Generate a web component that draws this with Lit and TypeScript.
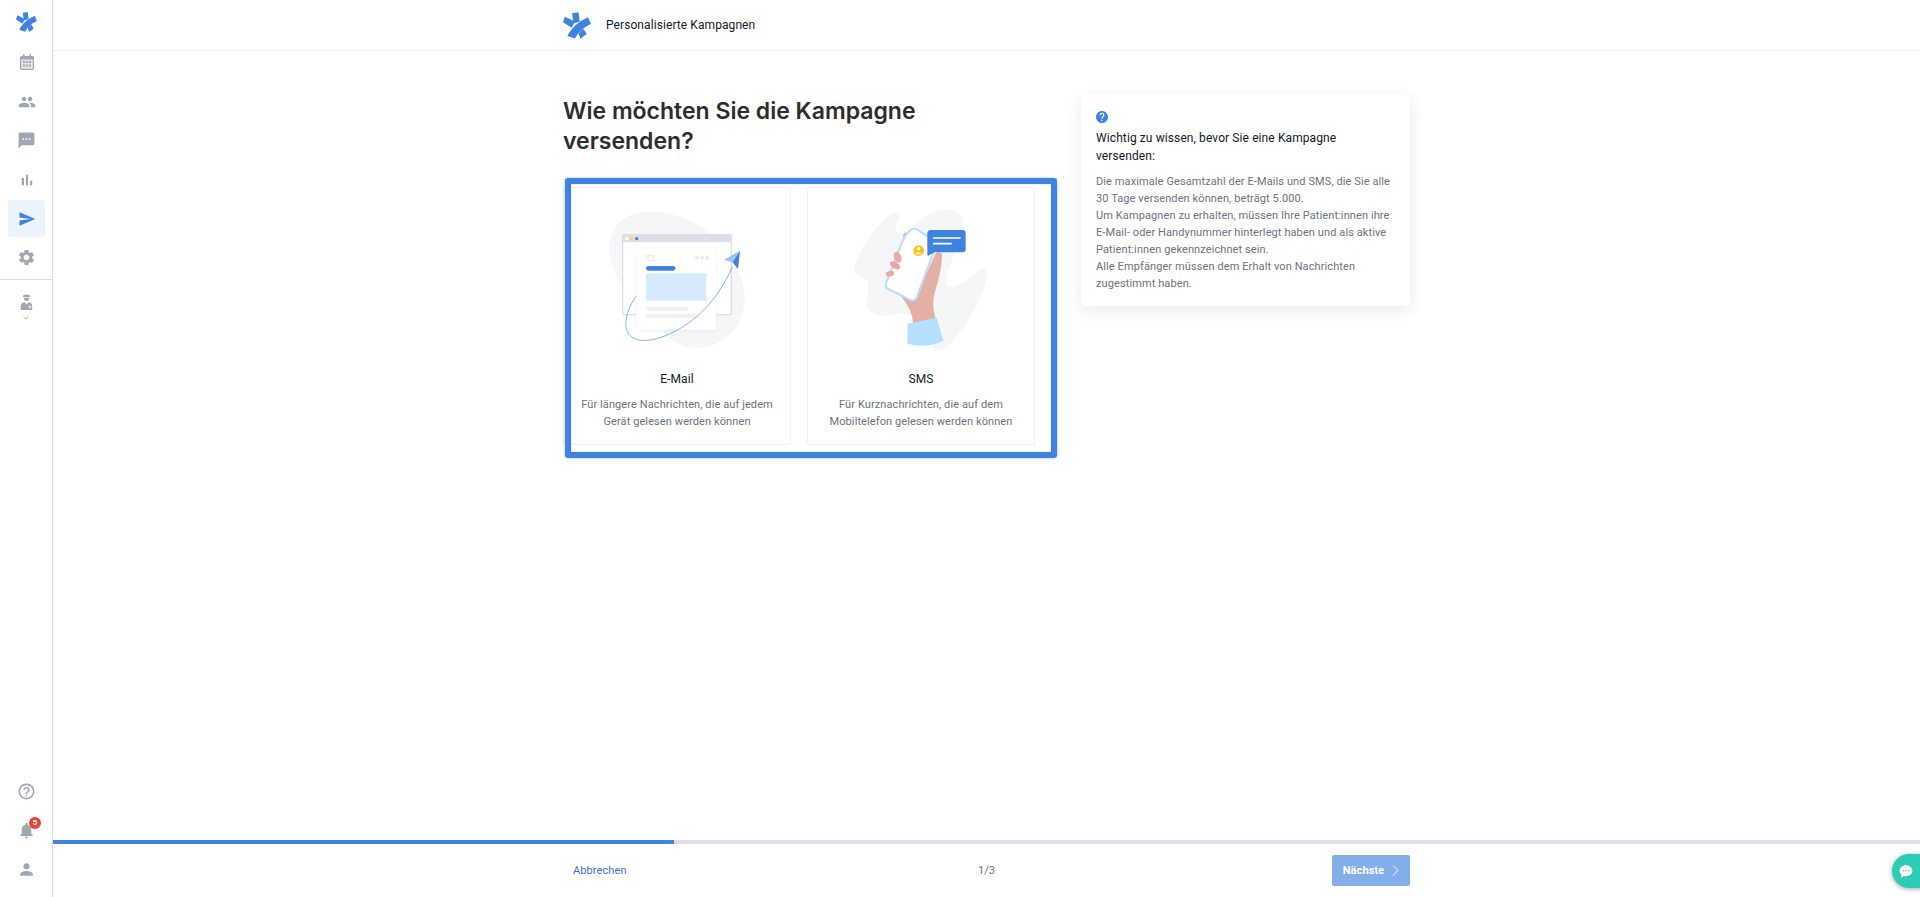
import { LitElement, html, css, svg } from "lit";
import { customElement } from "lit/decorators.js";

const LOGO = svg`<path d="M29 3 50 0 54 30 34 36z"/><path d="M0 32 6 14 38 30 28 50z"/><path d="M46 58 60 44 76 70 56 85z"/><path d="M80 16 90 38Q58 50 38 84L14 76Q32 38 80 16z" stroke="#fff" stroke-width="2" paint-order="stroke"/>`;

const icon = (d: string, size: number) => html`<svg class="mi" width=${size} height=${size} viewBox="0 0 24 24"><path d=${d}/></svg>`;

const P = {
  people: "M16 11c1.66 0 2.99-1.34 2.99-3S17.66 5 16 5c-1.66 0-3 1.34-3 3s1.34 3 3 3zm-8 0c1.66 0 2.99-1.34 2.99-3S9.66 5 8 5C6.34 5 5 6.34 5 8s1.34 3 3 3zm0 2c-2.33 0-7 1.17-7 3.5V19h14v-2.5c0-2.33-4.67-3.5-7-3.5zm8 0c-.29 0-.62.02-.97.05 1.16.84 1.97 1.97 1.97 3.45V19h6v-2.5c0-2.33-4.67-3.5-7-3.5z",
  sms: "M20 2H4c-1.1 0-1.99.9-1.99 2L2 22l4-4h14c1.1 0 2-.9 2-2V4c0-1.1-.9-2-2-2zM9 11H7V9h2v2zm4 0h-2V9h2v2zm4 0h-2V9h2v2z",
  bar: "M5 9.2h3V19H5zM10.6 5h2.8v14h-2.8zm5.6 8H19v6h-2.8z",
  send: "M2.01 21 23 12 2.01 3 2 10l15 2-15 2z",
  gear: "M19.14 12.94c.04-.3.06-.61.06-.94 0-.32-.02-.64-.07-.94l2.03-1.58c.18-.14.23-.41.12-.61l-1.92-3.32c-.12-.22-.37-.29-.59-.22l-2.39.96c-.5-.38-1.03-.7-1.62-.94l-.36-2.54c-.04-.24-.24-.41-.48-.41h-3.84c-.24 0-.43.17-.47.41l-.36 2.54c-.59.24-1.13.57-1.62.94l-2.39-.96c-.22-.08-.47 0-.59.22L2.74 8.87c-.12.21-.08.47.12.61l2.03 1.58c-.05.3-.09.63-.09.94s.02.64.07.94l-2.03 1.58c-.18.14-.23.41-.12.61l1.92 3.32c.12.22.37.29.59.22l2.39-.96c.5.38 1.03.7 1.62.94l.36 2.54c.05.24.24.41.48.41h3.84c.24 0 .44-.17.47-.41l.36-2.54c.59-.24 1.13-.56 1.62-.94l2.39.96c.22.08.47 0 .59-.22l1.92-3.32c.12-.22.07-.47-.12-.61l-2.01-1.58zM12 15.6c-1.98 0-3.6-1.62-3.6-3.6s1.62-3.6 3.6-3.6 3.6 1.62 3.6 3.6-1.62 3.6-3.6 3.6z",
  help: "M11 18h2v-2h-2v2zm1-16C6.48 2 2 6.48 2 12s4.48 10 10 10 10-4.48 10-10S17.52 2 12 2zm0 18c-4.41 0-8-3.59-8-8s3.59-8 8-8 8 3.59 8 8-3.59 8-8 8zm0-14c-2.21 0-4 1.79-4 4h2c0-1.1.9-2 2-2s2 .9 2 2c0 2-3 1.75-3 5h2c0-2.25 3-2.5 3-5 0-2.21-1.79-4-4-4z",
  bell: "M12 22c1.1 0 2-.9 2-2h-4c0 1.1.9 2 2 2zm6-6v-5c0-3.07-1.63-5.64-4.5-6.32V4c0-.83-.67-1.5-1.5-1.5s-1.5.67-1.5 1.5v.68C7.64 5.36 6 7.92 6 11v5l-2 2v1h16v-1l-2-2z",
  person: "M12 12c2.21 0 4-1.79 4-4s-1.79-4-4-4-4 1.79-4 4 1.79 4 4 4zm0 2c-2.67 0-8 1.34-8 4v2h16v-2c0-2.66-5.33-4-8-4z",
};

const emailArt = html`<svg class="art" width="160" height="160" viewBox="-9 0 480 480">
  <defs><filter id="ps" x="-20%" y="-20%" width="140%" height="140%"><feDropShadow dx="0" dy="3" stdDeviation="6" flood-color="#9aa3b2" flood-opacity=".16"/></filter></defs>
  <path d="M28 130C28 60 80 20 140 20c90 0 170 30 230 105 40 50 62 100 64 150 2 80-60 150-135 153-50 2-85-15-118-60-40-50-100-90-130-150-13-28-23-55-23-88z" fill="#f5f6f8"/>
  <rect x="68" y="89" width="326" height="240" rx="6" fill="#fff" stroke="#dcdfe5" stroke-width="4"/>
  <path d="M66 112V97q0-10 10-10h310q10 0 10 10v15z" fill="#dcdfe5"/>
  <circle cx="80" cy="101" r="5" fill="#fff"/><circle cx="95" cy="101" r="5" fill="#f8d25e"/><circle cx="110" cy="101" r="5" fill="#3f83e0"/>
  <rect x="110" y="132" width="238" height="242" fill="#fff" filter="url(#ps)"/>
  <rect x="141" y="151" width="21" height="15" fill="none" stroke="#e6e8ec" stroke-width="3"/><path d="M141 153l10 6 11-6" fill="none" stroke="#e6e8ec" stroke-width="2"/>
  <circle cx="291" cy="158" r="6" fill="#e9ebef"/><circle cx="307" cy="158" r="6" fill="#e9ebef"/><circle cx="322" cy="158" r="6" fill="#e9ebef"/>
  <rect x="138" y="183" width="88" height="14" rx="7" fill="#3f83e0"/>
  <rect x="138" y="205" width="181" height="82" fill="#d6ebff"/>
  <rect x="138" y="306" width="127" height="12" rx="6" fill="#eff0f3"/><rect x="138" y="327" width="155" height="12" rx="6" fill="#eff0f3"/>
  <path d="M110 272C80 310 62 372 95 396c45 32 150-15 210-75 40-38 70-85 92-135" fill="none" stroke="#6fa3e8" stroke-width="2.5"/>
  <path d="M372 165 420 137 398 172z" fill="#93c5fd"/><path d="M398 172 420 137 414 192z" fill="#3f7fdc"/>
</svg>`;

const smsArt = html`<svg class="art" width="160" height="160" viewBox="-12 0 480 480">
  <path d="M27 190C35 150 90 65 135 28 155 14 168 28 158 48 150 62 145 75 165 85 185 92 205 60 245 32 280 10 335 5 350 40 362 75 330 140 305 205 295 235 305 250 330 245 365 235 395 190 418 192 432 198 425 240 400 290 375 345 320 425 285 437 262 442 258 415 250 385 240 345 215 330 170 325 130 335 75 340 66 300 62 270 78 250 65 225 50 210 22 215 27 190z" fill="#f5f6f8"/>
  <path d="M176 110Q172 90 178 84q8-4 12 6l6 25z" fill="#e3afa7"/>
  <path d="M165 270 205 288 252 190 272 145Q285 138 291 148 292 190 270 260 258 300 272 340L203 356Q207 320 165 270z" fill="#e3afa7"/>
  <path d="M196 76Q208 66 220 76L268 108Q276 114 272 124L216 276Q208 292 194 284L130 252Q118 246 124 232L172 110Q180 90 196 76z" fill="#fff" stroke="#b9dcff" stroke-width="6"/>
  <ellipse cx="158" cy="157" rx="17" ry="11" transform="rotate(70 158 157)" fill="#eba9a3"/>
  <ellipse cx="150" cy="181" rx="17" ry="10" transform="rotate(30 150 181)" fill="#eba9a3"/>
  <ellipse cx="135" cy="206" rx="13" ry="8" transform="rotate(-10 135 206)" fill="#eba9a3"/>
  <circle cx="221" cy="137" r="16" fill="#fcc419"/><circle cx="221" cy="131" r="5" fill="#fff"/><path d="M212 145q9-8 18 0l-3 4h-12z" fill="#ffe9a8"/>
  <path d="M188 356 275 338 295 408Q240 432 187 416z" fill="#b6e0ff"/>
  <path d="M258 75H352Q362 75 362 85V132Q362 142 352 142H268L250 152Q247 153 247 149V86Q247 75 258 75z" fill="#3f83e0"/>
  <path d="M266 99H345M266 116H318" stroke="#fff" stroke-width="5" stroke-linecap="round"/>
</svg>`;

@customElement("app-root")
export class AppRoot extends LitElement {
  static styles = css`
    :host { display: block; height: 897px; font-family: Roboto, "Liberation Sans", sans-serif; background: #fff; overflow: hidden; position: relative; }
    * { box-sizing: border-box; }
    .shell { display: flex; height: 897px; }
    .side { width: 53px; flex: none; border-right: 1px solid #dcdfe5; display: flex; flex-direction: column; }
    .side-logo { height: 44px; display: flex; align-items: center; justify-content: center; }
    .side-logo svg, .head-logo { fill: #3f83e0; display: block; }
    .nav { display: flex; flex-direction: column; gap: 2px; }
    .nav.main { padding: 0 7px 0 8px; }
    .item { height: 37px; display: flex; align-items: center; justify-content: center; border-radius: 3px; position: relative; }
    .item .mi { fill: #a0a7b3; display: block; }
    .cal { display: block; margin-top: -1px; }
    .item.on { background: #ebf3fd; }
    .item.on .mi { fill: #3f83e0; }
    .rule { height: 1px; background: #dcdfe5; margin-top: 3px; }
    .doc { display: flex; flex-direction: column; align-items: center; padding-top: 14px; gap: 6px; }
    .spacer { flex: 1; }
    .nav.bottom { padding: 0 7px 9px 8px; }
    .badge { position: absolute; left: 21px; top: 5px; width: 12px; height: 12px; border-radius: 50%; background: #ea4335; color: #fff; font-size: 8px; font-weight: 700; line-height: 12px; text-align: center; }
    .main-col { flex: 1; min-width: 0; display: flex; flex-direction: column; }
    .wrap { width: 847px; margin: 0 auto; }
    header { height: 51px; border-bottom: 1px solid #eeeff1; flex: none; }
    header .wrap { height: 50px; display: flex; align-items: center; gap: 15px; }
    header .t { font-size: 12px; letter-spacing: .08px; color: #111827; }
    .content { flex: 1; padding-top: 46px; }
    .cols { display: flex; }
    .left { width: 518px; position: relative; }
    h1 { margin: 0; font-family: Inter, sans-serif; font-weight: 600; font-size: 23px; line-height: 29.500px; color: #2d2d2d; width: 400px; }
    .cards { display: flex; gap: 16px; margin-top: 31px; }
    .card { width: 228px; height: 258px; border: 1px solid #eef0f2; border-radius: 2px; display: flex; flex-direction: column; align-items: center; padding-top: 17px; text-align: center; }
    .art { display: block; flex: none; }
    .name { font-size: 12px; color: #111827; margin-top: 6px; line-height: 17px; letter-spacing: .1px; }
    .desc { font-size: 11px; letter-spacing: .1px; color: #6b7280; line-height: 17px; margin-top: 8px; }
    .focus { position: absolute; left: 2px; top: 81px; width: 492px; height: 280px; border: 6px solid #3f83e0; border-radius: 3px; box-shadow: 0 0 3px rgba(0,0,0,.3), inset 0 0 2px rgba(0,0,0,.2); pointer-events: none; }
    .info { width: 329px; height: 211px; margin-top: -2px; border-radius: 4px; background: #fff; box-shadow: 0 4px 16px rgba(40,50,70,.1); padding: 16px 15px 0; }
    .info .q { display: block; width: 12px; height: 12px; fill: #3f83e0; }
    .info h2 { margin: 6px 0 0; font-size: 12px; font-weight: 400; letter-spacing: .1px; color: #111827; line-height: 18px; }
    .info p { margin: 8px 0 0; font-size: 11px; letter-spacing: .1px; color: #6b7280; line-height: 17px; }
    .bar { height: 4px; background: #dcdfe5; flex: none; }
    .bar div { width: 621px; height: 4px; background: #3f83e0; }
    footer { height: 53px; flex: none; }
    footer .wrap { height: 53px; display: grid; grid-template-columns: 1fr auto 1fr; align-items: center; }
    .cancel { font-size: 11px; letter-spacing: .1px; color: #3f6fd6; padding-left: 10px; }
    .step { font-size: 11px; letter-spacing: .1px; color: #6b7280; }
    .next { justify-self: end; width: 78px; height: 31px; border-radius: 2px; background: #82aeea; color: #fff; font-size: 11px; letter-spacing: .1px; font-weight: 700; display: flex; align-items: center; justify-content: center; gap: 8px; }
    .chat { position: absolute; right: -6px; top: 854px; width: 34px; height: 34px; border-radius: 17px 0 0 17px; background: #2dccb5; box-shadow: 0 1px 5px rgba(0,0,0,.35); display: flex; align-items: center; padding-left: 7px; }
  `;

  render() {
    return html`<div class="shell">
      <aside class="side">
        <div class="side-logo"><svg width="21" height="20" viewBox="0 0 90 85">${LOGO}</svg></div>
        <div class="nav main">
          <div class="item"><svg class="cal" width="14" height="16" viewBox="0 0 14 16"><path fill="#a0a7b3" d="M3 0h1.500v2h5V0H11v2h1.500Q14 2 14 3.500V14.500Q14 16 12.500 16H1.500Q0 16 0 14.500V3.500Q0 2 1.500 2H3z"/><rect x="1.200" y="5.500" width="11.600" height="9.300" fill="#e4e6ea"/><path fill="#a0a7b3" d="M3 7h2v2H3zM6 7h2v2H6zM9 7h2v2H9zM3 10.500h2v2H3zM6 10.500h2v2H6zM9 10.500h2v2H9z"/></svg></div>
          <div class="item">${icon(P.people, 18)}</div>
          <div class="item">${icon(P.sms, 19)}</div>
          <div class="item">${icon(P.bar, 18)}</div>
          <div class="item on">${icon(P.send, 18)}</div>
          <div class="item">${icon(P.gear, 19)}</div>
        </div>
        <div class="rule"></div>
        <div class="doc">
          <svg width="13" height="16" viewBox="0 0 13 16" fill="#a0a7b3"><path d="M3.200 1.200Q6.500-.4 9.800 1.200V3.200H3.200z"/><path d="M3.900 4H9.100Q9.100 7 6.500 7 3.900 7 3.900 4z"/><path fill-rule="evenodd" d="M.8 16V11.500Q.8 9 4.500 8.200L6.500 10.500 8.500 8.200Q12.200 9 12.200 11.500V16zM8.500 12.500h1v-1h.8v1h1v.9h-1v1h-.8v-1h-1z"/></svg>
          <svg width="6" height="4" viewBox="0 0 6 4"><path d="M.5.5 3 3 5.500.5" fill="none" stroke="#a0a7b3" stroke-width=".8"/></svg>
        </div>
        <div class="spacer"></div>
        <div class="nav bottom">
          <div class="item">${icon(P.help, 19)}</div>
          <div class="item">${icon(P.bell, 19)}<span class="badge">5</span></div>
          <div class="item">${icon(P.person, 19)}</div>
        </div>
      </aside>
      <div class="main-col">
        <header><div class="wrap">
          <svg class="head-logo" width="28" height="27" viewBox="0 0 90 85">${LOGO}</svg>
          <span class="t">Personalisierte Kampagnen</span>
        </div></header>
        <div class="content"><div class="wrap cols">
          <div class="left">
            <h1>Wie möchten Sie die Kampagne versenden?</h1>
            <div class="cards">
              <div class="card">${emailArt}<div class="name">E-Mail</div><div class="desc">Für längere Nachrichten, die auf jedem<br>Gerät gelesen werden können</div></div>
              <div class="card">${smsArt}<div class="name">SMS</div><div class="desc">Für Kurznachrichten, die auf dem<br>Mobiltelefon gelesen werden können</div></div>
            </div>
            <div class="focus"></div>
          </div>
          <section class="info">
            <svg class="q" viewBox="2 2 20 20"><path d="M12 2C6.480 2 2 6.480 2 12s4.480 10 10 10 10-4.480 10-10S17.520 2 12 2zm1 17h-2v-2h2v2zm2.070-7.750-.9.920C13.450 12.900 13 13.500 13 15h-2v-.5c0-1.100.45-2.100 1.170-2.830l1.240-1.260c.37-.36.59-.86.59-1.410 0-1.100-.9-2-2-2s-2 .9-2 2H8c0-2.210 1.790-4 4-4s4 1.790 4 4c0 .88-.36 1.680-.93 2.250z"/></svg>
            <h2>Wichtig zu wissen, bevor Sie eine Kampagne versenden:</h2>
            <p>Die maximale Gesamtzahl der E-Mails und SMS, die Sie alle 30 Tage versenden können, beträgt 5.000.<br>Um Kampagnen zu erhalten, müssen Ihre Patient:innen ihre E-Mail- oder Handynummer hinterlegt haben und als aktive Patient:innen gekennzeichnet sein.<br>Alle Empfänger müssen dem Erhalt von Nachrichten zugestimmt haben.</p>
          </section>
        </div></div>
        <div class="bar"><div></div></div>
        <footer><div class="wrap">
          <div class="cancel">Abbrechen</div>
          <div class="step">1/3</div>
          <div class="next"><span>Nächste</span><svg width="7" height="11" viewBox="0 0 7 11"><path d="M1 .5 6 5.500 1 10.500" fill="none" stroke="#fff" stroke-width="1"/></svg></div>
        </div></footer>
      </div>
    </div>
    <div class="chat"><svg width="14" height="14" viewBox="0 0 24 24"><path fill="#fff" d="M12 2C5.900 2 1 6.200 1 11.500c0 2.700 1.300 5.100 3.400 6.800L3 23l5.500-2.600c1.100.3 2.300.5 3.500.5 6.100 0 11-4.200 11-9.400S18.100 2 12 2z"/><circle cx="7.500" cy="11.500" r="1.300" fill="#2dccb5"/><circle cx="12" cy="11.500" r="1.300" fill="#2dccb5"/><circle cx="16.500" cy="11.500" r="1.300" fill="#2dccb5"/></svg></div>`;
  }
}
